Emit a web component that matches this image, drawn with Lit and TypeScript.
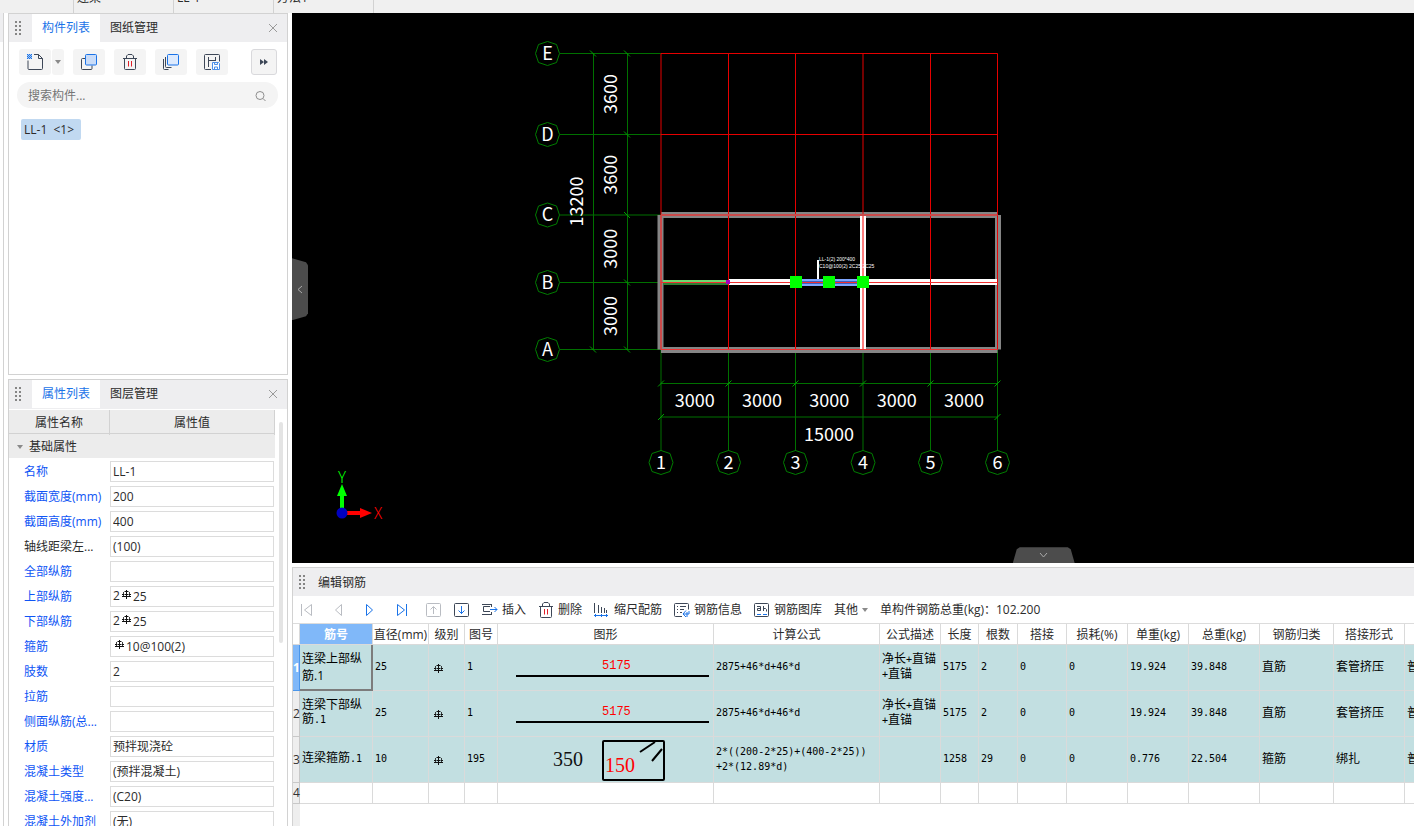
import { LitElement, html, svg, css, nothing } from "lit";
import { customElement, property } from "lit/decorators.js";
import { classMap } from "lit/directives/class-map.js";

const shared = css`
  *, *::before, *::after { box-sizing: border-box; }
  :host { font: 12px/16px "Open Sans", "Noto Sans CJK SC", sans-serif; color: #2b2b2b; }
  button, input { font: inherit; color: inherit; }
  button { border: 0; padding: 0; background: none; cursor: pointer; display: inline-flex; align-items: center; justify-content: center; }
  svg { display: block; flex: none; }
`;

const INK = "#3d4757";
const BLUE = "#1a73e8";

const grip = html`<svg width="8" height="16" fill="#858585">
  ${[0, 4, 8, 12].map((y) => svg`<rect x="1" y=${y + 1} width="2" height="2"/><rect x="5" y=${y + 1} width="2" height="2"/>`)}
</svg>`;
const closeIcon = html`<svg width="10" height="10" stroke="#9a9a9a" fill="none"><path d="M1 1l8 8M9 1l-8 8"/></svg>`;
const caret = html`<svg width="6" height="4" fill="#8a8a8a"><path d="M0 0h6l-3 4z"/></svg>`;
const rebar = html`<svg class="rebar" width="9" height="9" viewBox="0 0 9 9" fill="none" stroke="#111">
  <path d="M4.500 0v9M0 6.500h9M0 4.500h2M7 4.500h2M2.500 1.500h4M2.500 4.500h4"/><path d="M1.500 2v4M7.500 2v4" opacity=".8"/>
</svg>`;

const icons = {
  create: html`<svg width="16" height="16" fill="none" stroke=${INK}>
    <path d="M7 .500h4.500l4 4v10a1 1 0 0 1-1 1h-12.500a1 1 0 0 1-1-1v-8M11.500 .500v4h4"/>
    <g fill=${BLUE} stroke="none">${[0, 1, 2, 3, 4].map((r) => [0, 1, 2, 3, 4].map((c) => ((r + c) % 2 ? nothing : svg`<rect x=${c} y=${r} width="1" height="1"/>`)))}
    <rect width="5" height="5" opacity=".35"/></g></svg>`,
  copy: html`<svg width="16" height="16" fill="none" stroke=${INK}>
    <path d="M4.500 4.500h-3a1 1 0 0 0-1 1v9a1 1 0 0 0 1 1h8.500a1 1 0 0 0 1-1v-3"/>
    <rect x="4.500" y=".500" width="11" height="10.500" rx="1" fill="#c9dcf8" stroke=${BLUE}/></svg>`,
  trash: html`<svg width="16" height="16" fill="none" stroke=${INK}>
    <path d="M1 4.500h14M4.500 4.500v-2.500l1.500-1.500h4l1.500 1.500v2.500M2.500 4.500v10a1 1 0 0 0 1 1h9a1 1 0 0 0 1-1v-10"/>
    <path stroke="#e0202a" d="M6.500 7v5.500M9.500 7v5.500"/></svg>`,
  layers: html`<svg width="16" height="16" fill="none" stroke=${INK}>
    <path d="M.500 5v9.500a1 1 0 0 0 1 1h4M2.500 3v9.500a1 1 0 0 0 1 1h5"/>
    <rect x="4.500" y=".500" width="11" height="10.500" rx="1" fill="#ddeafd" stroke=${BLUE}/></svg>`,
  save: html`<svg width="16" height="16" fill="none" stroke=${INK}>
    <path d="M7 15.500h-5.500a1 1 0 0 1-1-1v-13a1 1 0 0 1 1-1h13a1 1 0 0 1 1 1v6M4.500 3v10M4.500 6.500h7M11.500 3v4"/>
    <path stroke="#4b8fe8" fill="#fff" d="M8.500 8.500h6l1 1v6h-7zM10.500 8.500v2h3v-2M10.500 15v-2h3v2"/></svg>`,
  more: html`<svg width="8" height="8" fill=${INK}><path d="M0 1l4 3-4 3zM4 1l4 3-4 3z"/></svg>`,
  search: html`<svg width="12" height="12" fill="none" stroke="#8e8e8e"><circle cx="5" cy="5.500" r="4"/><path d="M8 8.500l2.500 2.500"/></svg>`,
  first: html`<svg width="16" height="16" fill="none" stroke="#b9bcc2"><path d="M3.500 2v12M13.500 2.500v11l-7-5.500z"/></svg>`,
  prev: html`<svg width="16" height="16" fill="none" stroke="#b9bcc2"><path d="M11.500 2.500v11l-6-5.500z"/></svg>`,
  next: html`<svg width="16" height="16" fill="none" stroke=${BLUE}><path d="M4.500 2.500v11l6-5.500z"/></svg>`,
  last: html`<svg width="16" height="16" fill="none" stroke=${BLUE}><path d="M3.500 2.500v11l7-5.500zM12.500 2v12"/></svg>`,
  up: html`<svg width="16" height="16" fill="none" stroke="#b9bcc2"><rect x=".500" y="1.500" width="14" height="13" rx="1"/><path d="M7.500 12v-7M4.500 7.500l3-3 3 3"/></svg>`,
  down: html`<svg width="16" height="16" fill="none" stroke=${INK}><rect x=".500" y="1.500" width="14" height="13" rx="1"/><path stroke=${BLUE} d="M7.500 4v8M4.500 8.500l3 3 3-3"/></svg>`,
  insert: html`<svg width="16" height="16" fill="none" stroke=${INK}><path d="M0 2.500h10M8 4.500h-6.500v5h6.500M0 12.500h10M9.500 2v3M9.500 10v3"/><path stroke=${BLUE} d="M8 7.500h7M12.500 5l2.500 2.500-2.500 2.500"/></svg>`,
  scale: html`<svg width="16" height="16" fill="none" stroke=${INK}><path d="M.500 1v10M4.500 3v8M7.500 5v6M10.500 6v5M12.500 8v3"/><path stroke=${BLUE} d="M0 13.500h14M1.500 12v3M7.500 12v3M12.500 12v3"/></svg>`,
  info: html`<svg width="16" height="16" fill="none" stroke=${INK}><path d="M8 14.500h-6.500a1 1 0 0 1-1-1v-11a1 1 0 0 1 1-1h12a1 1 0 0 1 1 1v5M3 4.500h1M6 4.500h6M3 7.500h1M6 7.500h4M3 10.500h1M6 10.500h2"/><path stroke=${BLUE} d="M15 9v3h-6M12 8.500l-3 3.500 3 3M13 10v5"/></svg>`,
  library: html`<svg width="16" height="16" fill="none" stroke=${INK}><rect x=".500" y="1.500" width="14" height="13" rx="1"/><path d="M3 4.500h3.500v4M3.500 8.500h3v-2h-3zM9.500 4v5M9.500 6.500h2l1 1v2"/><path stroke=${BLUE} d="M3 12.500h4M9 12.500h4"/></svg>`,
};

@customElement("dock-header")
class DockHeader extends LitElement {
  @property({ type: Array }) tabs: string[] = [];
  @property({ type: Boolean }) plain = false;
  static styles = [shared, css`
    :host { display: flex; align-items: stretch; height: 28px; flex: none; background: #eeeef0; }
    .grip { width: 23px; padding-left: 5px; display: flex; align-items: center; flex: none; }
    .tab { padding: 0 10px; }
    .on { background: #fff; color: #1a73e8; }
    .title { padding: 2px 2px 0; display: flex; align-items: center; }
    .close { margin-left: auto; width: 28px; }
  `];
  render() {
    return html`<span class="grip">${grip}</span>
      ${this.plain
        ? html`<span class="title">${this.tabs[0]}</span>`
        : html`${this.tabs.map((t, i) => html`<button class=${classMap({ tab: true, on: i === 0 })}>${t}</button>`)}
          <button class="close" aria-label="关闭">${closeIcon}</button>`}`;
  }
}

@customElement("component-panel")
class ComponentPanel extends LitElement {
  static styles = [shared, css`
    :host { display: flex; flex-direction: column; border: 1px solid #d2d2d2; background: #fff; overflow: hidden; }
    .tools { display: flex; gap: 9px; padding: 7px 10px 0; }
    .tools button { width: 32px; height: 26px; background: #f4f4f4; border-radius: 3px; }
    .split { display: flex; gap: 1px; }
    .tools .drop { width: 12px; }
    .tools .more { width: 26px; margin-left: auto; border: 1px solid #d9d9dc; }
    .search { display: flex; align-items: center; height: 26px; margin: 7px 9px 0 8px; padding: 1px 11px 0; border-radius: 13px; background: #f4f4f4; }
    .search input { flex: 1; min-width: 0; border: 0; padding: 0; background: none; outline: 0; }
    .search input::placeholder { color: #757575; }
    .item { margin: 11px 12px; padding: 2px 3px; width: 60px; height: 21px; background: #c1d9f1; border-radius: 2px; white-space: pre; justify-content: flex-start; }
  `];
  render() {
    return html`<dock-header .tabs=${["构件列表", "图纸管理"]}></dock-header>
      <div class="tools">
        <span class="split"><button aria-label="新建">${icons.create}</button><button class="drop" aria-label="新建选项">${caret}</button></span>
        <button aria-label="复制">${icons.copy}</button>
        <button aria-label="删除">${icons.trash}</button>
        <button aria-label="层间复制">${icons.layers}</button>
        <button aria-label="存档">${icons.save}</button>
        <button class="more" aria-label="更多">${icons.more}</button>
      </div>
      <label class="search"><input type="text" placeholder="搜索构件..." aria-label="搜索构件">${icons.search}</label>
      <button class="item">${"LL-1  <1>"}</button>`;
  }
}

interface Prop { name: string; value: string; plain?: boolean }
const PROPS: Prop[] = [
  { name: "名称", value: "LL-1" },
  { name: "截面宽度(mm)", value: "200" },
  { name: "截面高度(mm)", value: "400" },
  { name: "轴线距梁左...", value: "(100)", plain: true },
  { name: "全部纵筋", value: "" },
  { name: "上部纵筋", value: "2#25" },
  { name: "下部纵筋", value: "2#25" },
  { name: "箍筋", value: "#10@100(2)" },
  { name: "肢数", value: "2" },
  { name: "拉筋", value: "" },
  { name: "侧面纵筋(总...", value: "" },
  { name: "材质", value: "预拌现浇砼" },
  { name: "混凝土类型", value: "(预拌混凝土)" },
  { name: "混凝土强度...", value: "(C20)" },
  { name: "混凝土外加剂", value: "(无)" },
];

@customElement("property-panel")
class PropertyPanel extends LitElement {
  static styles = [shared, css`
    :host { display: flex; flex-direction: column; border: 1px solid #d2d2d2; border-bottom: 0; background: #fff; overflow: hidden; }
    dock-header { border-bottom: 1px solid #eeeef0; height: 29px; }
    .body { display: flex; flex: 1; min-height: 0; overflow: hidden; padding-top: 1px; }
    .grid { flex: 1; min-width: 0; }
    .head { display: grid; grid-template-columns: 101px minmax(0, 1fr); height: 24px; background: #ececec; border-bottom: 1px solid #d2d2d2; text-align: center; line-height: 25px; }
    .head span { border-right: 1px solid #d2d2d2; }
    .group { display: flex; width: 100%; justify-content: flex-start; gap: 6px; height: 24px; padding: 2px 0 0 8px; background: #ececec; margin-bottom: 1px; }
    .row { display: grid; grid-template-columns: 86px minmax(0, 1fr); align-items: center; height: 25px; padding: 0 1px 0 15px; }
    .row label { color: #0f55f5; white-space: nowrap; padding-top: 2px; }
    .row .plain { color: #2b2b2b; }
    .field { display: flex; align-items: center; height: 21px; border: 1px solid #dcdcdc; padding: 0 2px; background: #fff; min-width: 0; }
    .field input { flex: 1; width: 0; min-width: 0; border: 0; padding: 0; outline: 0; background: none; height: 19px; }
    .rebar { margin: 0 2px 4px; }
    .track { width: 12px; padding: 12px 4px 0; }
    .thumb { width: 4px; height: 221px; border-radius: 2px; background: #e4e4e4; }
  `];
  private row(p: Prop, i: number) {
    const at = p.value.indexOf("#");
    return html`<div class="row">
      <label for="p${i}" class=${classMap({ plain: !!p.plain })}>${p.name}</label>
      <div class="field">${at >= 0 ? html`${p.value.slice(0, at)}${rebar}` : nothing}<input id="p${i}" type="text" .value=${p.value.slice(at + 1)}></div>
    </div>`;
  }
  render() {
    return html`<dock-header .tabs=${["属性列表", "图层管理"]}></dock-header>
      <div class="body">
        <div class="grid">
          <div class="head"><span>属性名称</span><span>属性值</span></div>
          <button class="group">${caret}基础属性</button>
          ${PROPS.map((p, i) => this.row(p, i))}
        </div>
        <div class="track"><div class="thumb"></div></div>
      </div>`;
  }
}

const XS = [369, 436.5, 503.5, 571, 638.5, 705.5];
const YS = [40.5, 121.5, 202, 269.5, 336.5];
const LETTERS = ["E", "D", "C", "B", "A"];

@customElement("plan-canvas")
class PlanCanvas extends LitElement {
  static styles = [shared, css`
    :host { display: block; position: relative; background: #000; overflow: hidden; }
    .plan { width: 100%; height: 100%; }
    .plan text { font-family: "Noto Sans CJK SC", sans-serif; font-size: 18px; fill: #fff; text-anchor: middle; }
    .plan .note { font-family: "Liberation Sans", sans-serif; font-size: 5px; text-anchor: start; }
    .plan .axis { font-size: 16px; font-weight: 300; }
    .plan .x { fill: #f00; }
    .plan .y { fill: #0f0; }
    .toggle { position: absolute; background: #4c4c4c; }
    .side { left: 0; top: calc(50% - 30px); width: 16px; height: 62px; clip-path: polygon(0 0, 14px 4px, 100% 7px, 100% 55px, 14px 58px, 0 100%); }
    .foot { left: calc(67% - 31px); bottom: 0; width: 62px; height: 16px; clip-path: polygon(0 100%, 4px 2px, 7px 0, 55px 0, 58px 2px, 100% 100%); }
  `];
  private bubble(cx: number, cy: number, label: string) {
    const d = 12, k = 9;
    const pts = [[d, 0], [k, k], [0, d], [-k, k], [-d, 0], [-k, -k], [0, -d], [k, -k]].map(([x, y]) => `${cx + x},${cy + y}`).join(" ");
    return svg`<polygon points=${pts} fill="none" stroke="#007d00"/><text x=${cx} y=${cy + 6}>${label}</text>`;
  }
  private vText(x: number, y: number, t: string) {
    return svg`<text transform="translate(${x} ${y}) rotate(-90)">${t}</text>`;
  }
  render() {
    const [x1, x2, x3, x4, , x6] = XS;
    const [yE, , yC, yB, yA] = YS;
    const mid = (a: number[], i: number) => (a[i] + a[i + 1]) / 2;
    return html`<svg class="plan" role="img" aria-label="轴网平面图" fill="none">
      <g stroke="#007000">
        ${YS.map((y) => svg`<path d="M268 ${y}H${x1}"/>`)}
        ${XS.map((x) => svg`<path d="M${x} ${yA}V438"/>`)}
        <path d="M301.500 ${yE}V${yA}M335.500 ${yE}V${yA}M${x1} 370.500H${x6}M${x1} 404H${x6}"/>
      </g>
      <g stroke="#00a000">
        ${YS.map((y) => svg`<path d="M332 ${y - 3}l6 6"/>`)}
        ${[yE, yA].map((y) => svg`<path d="M298 ${y - 3}l6 6"/>`)}
        ${XS.map((x) => svg`<path d="M${x - 3} 373.500l6 -6"/>`)}
        ${[x1, x6].map((x) => svg`<path d="M${x - 3} 407l6 -6"/>`)}
      </g>
      ${YS.map((y, i) => this.bubble(255.5, y, LETTERS[i]))}
      ${XS.map((x, i) => this.bubble(x, 449.5, String(i + 1)))}
      ${["3600", "3600", "3000", "3000"].map((t, i) => this.vText(325, mid(YS, i), t))}
      ${this.vText(291, 188.5, "13200")}
      ${[0, 1, 2, 3, 4].map((i) => svg`<text x=${mid(XS, i)} y="394">3000</text>`)}
      <text x="537" y="428">15000</text>

      <g stroke="#858585" stroke-width="6">
        <path d="M${x1} ${yC}H${x6}M${x1} ${yA + 0.5}H${x6}M${x1 - 0.5} ${yC}V${yA}M${x6 + 0.5} ${yC}V${yA}"/>
      </g>
      <path stroke="#6fd86f" stroke-width="2" d="M371 268H${x2}"/>
      <path stroke="#2e7d32" stroke-width="2" d="M371 271H${x2}"/>
      <path stroke="#fff" stroke-width="6" d="M${x2} 269H${x6}M${x4} ${yC}V${yA}"/>
      <path stroke="#7ea6ff" stroke-width="7" d="M${x3} 269.500H${x4}"/>
      <path stroke="#3f5fc0" stroke-width="3" d="M${x3} 269.500H${x4}"/>
      <g stroke="#e60000">
        ${[x1, x2, x3, XS[4], x6].map((x) => svg`<path d="M${x} ${yE}V${yA}"/>`)}
        <path d="M${x4} ${yE}V${yC}M${x1} ${yE}H${x6}M${x1} ${YS[1]}H${x6}"/>
      </g>
      <path stroke="#ff7f7f" stroke-width="2" d="M${x4} ${yC}V${yA}"/>
      <path stroke="#cb4a4a" stroke-width="2" d="M${x1} ${yC}H${x6}M${x1} ${yC}V${yA}"/>
      <path stroke="#f03030" d="M${x1} ${yB}H${x6}M${x1} ${yA}H${x6}"/>
      <rect x="434" y="267" width="4" height="4" fill="#a000c0"/>
      <path stroke="#fff" stroke-width="2" d="M526 247v19"/>
      ${[x3, 537, x4].map((x) => svg`<rect x=${Math.round(x) - 6} y="263" width="12" height="12" fill="#0f0"/>`)}
      <text class="note" x="527" y="248">LL-1(2) 200*400</text>
      <text class="note" x="527" y="255">C10@100(2) 2C25;2C25</text>

      <path stroke="#0f0" stroke-width="4" d="M50 480v16"/><path fill="#0f0" d="M50 471l5 12h-10z"/>
      <path stroke="#f00" stroke-width="4" d="M55 500h14"/><path fill="#f00" d="M80 500l-12 5v-10z"/>
      <circle cx="50" cy="500" r="5.500" fill="#0000c0"/>
      <text class="axis y" x="50" y="470">Y</text><text class="axis x" x="86" y="506">X</text>
    </svg>
    <button class="toggle side" aria-label="收起左侧"><svg width="6" height="9" fill="none" stroke="#aaa"><path d="M5 1l-4 3.500 4 3.500"/></svg></button>
    <button class="toggle foot" aria-label="收起下方"><svg width="9" height="6" fill="none" stroke="#aaa"><path d="M1 1l3.500 4 3.500-4"/></svg></button>`;
  }
}

const COLUMNS: [string, number][] = [
  ["", 7], ["筋号", 73], ["直径(mm)", 56], ["级别", 36], ["图号", 33], ["图形", 216], ["计算公式", 166], ["公式描述", 61],
  ["长度", 38], ["根数", 39], ["搭接", 49], ["损耗(%)", 61], ["单重(kg)", 61], ["总重(kg)", 71], ["钢筋归类", 74], ["搭接形式", 71], ["", 71],
];
interface Bar { name: string; d: string; fig: string; formula: string; desc: string; len: string; n: string; unit: string; total: string; kind: string; joint: string; stirrup?: boolean }
const BARS: Bar[] = [
  { name: "连梁上部纵筋.1", d: "25", fig: "1", formula: "2875+46*d+46*d", desc: "净长+直锚\n+直锚", len: "5175", n: "2", unit: "19.924", total: "39.848", kind: "直筋", joint: "套管挤压" },
  { name: "连梁下部纵\n筋.1", d: "25", fig: "1", formula: "2875+46*d+46*d", desc: "净长+直锚\n+直锚", len: "5175", n: "2", unit: "19.924", total: "39.848", kind: "直筋", joint: "套管挤压" },
  { name: "连梁箍筋.1", d: "10", fig: "195", formula: "2*((200-2*25)+(400-2*25))\n+2*(12.89*d)", desc: "", len: "1258", n: "29", unit: "0.776", total: "22.504", kind: "箍筋", joint: "绑扎", stirrup: true },
];

/* ASCII runs take a half-width face so that they pair with the full-width characters. */
const mixed = (s: string) => s.split(/([\x20-\x7e]+)/).filter(Boolean).map((run) => (/^[\x20-\x7e]/.test(run) ? html`<span class="half">${run}</span>` : run));

@customElement("rebar-panel")
class RebarPanel extends LitElement {
  static styles = [shared, css`
    :host { display: flex; flex-direction: column; border: solid #d2d2d2; border-width: 1px 0 0 1px; background: #fff; overflow: hidden; }
    .bar { display: flex; align-items: center; gap: 12px; height: 28px; flex: none; padding-left: 5px; border-bottom: 1px solid #dcdcdc; white-space: nowrap; }
    .nav { display: flex; gap: 16px; }
    .bar button { gap: 4px; }
    .sheet { flex: 1; overflow: hidden; background: linear-gradient(90deg, #eee 7px, #fff 7px); }
    table { table-layout: fixed; border-collapse: separate; border-spacing: 0; width: 0; }
    th, td { padding: 0; height: 46px; border: solid #dadada; border-width: 0 1px 1px 0; font-weight: 400; background: #c2dfe1; color: #000; text-align: left; }
    td { padding: 0 2px 2px; line-height: 14px; white-space: pre-line; }
    thead th { height: 21px; padding-top: 2px; line-height: 16px; background: #fff; color: #2b2b2b; text-align: center; white-space: nowrap; }
    thead .picked { background: #80b8f9; color: #fff; font-weight: 700; }
    tbody th { background: #eee; text-align: center; border-right-color: #c8c8c8; border-bottom-color: #c8c8c8; color: #333; }
    tbody th.picked { background: #80b8f9; color: #fff; font-weight: 700; border-color: #4a96ea; }
    .blank th, .blank td { height: 21px; }
    .blank td { background: #fff; }
    td.current { border-right: 2px solid #7c7c7c; border-bottom: 2px solid #7c7c7c; line-height: 17px; padding-bottom: 0; }
    td.figure { padding: 0; }
    .half { font: 10px/14px "DejaVu Sans Mono", monospace; }
    .rebar { margin-left: 3px; margin-top: 4px; }
    .figure text { font: 12px "Liberation Mono", monospace; fill: #f00; }
    .figure .big { font: 20px "Liberation Serif", serif; }
    .figure .ink { fill: #111; }
  `];
  private figure(b: Bar) {
    return html`<svg width="100%" height="45" fill="none" stroke="none">${b.stirrup
      ? svg`<rect x="105" y="4" width="61" height="39" rx="1" stroke="#000" stroke-width="2"/>
          <path stroke="#000" stroke-width="2" d="M142 15l15-10M154 24l10-12"/>
          <text class="big ink" x="55" y="29">350</text><text class="big" x="107" y="35">150</text>`
      : svg`<text x="104" y="24">${b.len}</text><path stroke="#000" stroke-width="2" d="M18 31h193"/>`}</svg>`;
  }
  render() {
    return html`<dock-header plain .tabs=${["编辑钢筋"]}></dock-header>
      <div class="bar">
        <div class="nav">
          <button aria-label="第一条">${icons.first}</button><button aria-label="上一条">${icons.prev}</button>
          <button aria-label="下一条">${icons.next}</button><button aria-label="最后一条">${icons.last}</button>
          <button aria-label="上移">${icons.up}</button>
        </div>
        <button aria-label="下移">${icons.down}</button>
        <button>${icons.insert}插入</button>
        <button>${icons.trash}删除</button>
        <button>${icons.scale}缩尺配筋</button>
        <button>${icons.info}钢筋信息</button>
        <button>${icons.library}钢筋图库</button>
        <button>其他${caret}</button>
        <span>单构件钢筋总重(kg)：102.200</span>
      </div>
      <div class="sheet">
        <table>
          <colgroup>${COLUMNS.map(([, w]) => html`<col width=${w}>`)}</colgroup>
          <thead><tr>${COLUMNS.map(([t], i) => html`<th scope="col" class=${classMap({ picked: i === 1 })}>${t}</th>`)}</tr></thead>
          <tbody>
            ${BARS.map((b, i) => html`<tr>
              <th scope="row" class=${classMap({ picked: i === 0 })}>${i + 1}</th>
              <td class=${classMap({ current: i === 0 })}>${i === 0 ? b.name : mixed(b.name)}</td>
              <td>${mixed(b.d)}</td><td>${rebar}</td><td>${mixed(b.fig)}</td>
              <td class="figure">${this.figure(b)}</td>
              <td>${mixed(b.formula)}</td><td>${mixed(b.desc)}</td><td>${mixed(b.len)}</td><td>${mixed(b.n)}</td>
              <td>${mixed("0")}</td><td>${mixed("0")}</td><td>${mixed(b.unit)}</td><td>${mixed(b.total)}</td>
              <td>${b.kind}</td><td>${b.joint}</td><td>普</td>
            </tr>`)}
            <tr class="blank"><th scope="row">4</th>${COLUMNS.slice(1).map(() => html`<td></td>`)}</tr>
          </tbody>
        </table>
      </div>`;
  }
}

@customElement("app-root")
class AppRoot extends LitElement {
  static styles = [shared, css`
    :host { display: flex; flex-direction: column; height: 100vh; overflow: hidden; background: #fff; }
    .strip { display: flex; align-items: flex-end; height: 13px; flex: none; overflow: hidden; background: #f0f0f0; }
    .strip span { flex: none; width: 100px; height: 26px; padding: 3px 4px 7px 3px; border-right: 1px solid #d2d2d2; }
    .strip .lead { width: 74px; }
    .work { flex: 1; display: flex; gap: 4px; min-height: 0; }
    .edge { width: 4px; border-right: 1px solid #d2d2d2; background: linear-gradient(#eeeef0 29px, #fff 29px); flex: none; }
    .dock, .main { display: flex; flex-direction: column; gap: 4px; min-height: 0; }
    .dock { width: 280px; flex: none; }
    .main { flex: 1; min-width: 0; }
    component-panel { flex: 361 1 0; min-height: 0; }
    property-panel { flex: 448 1 0; min-height: 0; }
    plan-canvas { flex: 551 1 0; min-height: 0; }
    rebar-panel { flex: 258 1 0; min-height: 0; }
  `];
  render() {
    return html`<div class="strip"><span class="lead"></span><span>连梁</span><span>LL-1</span><span>方法1</span></div>
      <div class="work">
        <div class="edge"></div>
        <div class="dock"><component-panel></component-panel><property-panel></property-panel></div>
        <div class="main"><plan-canvas></plan-canvas><rebar-panel></rebar-panel></div>
      </div>`;
  }
}
